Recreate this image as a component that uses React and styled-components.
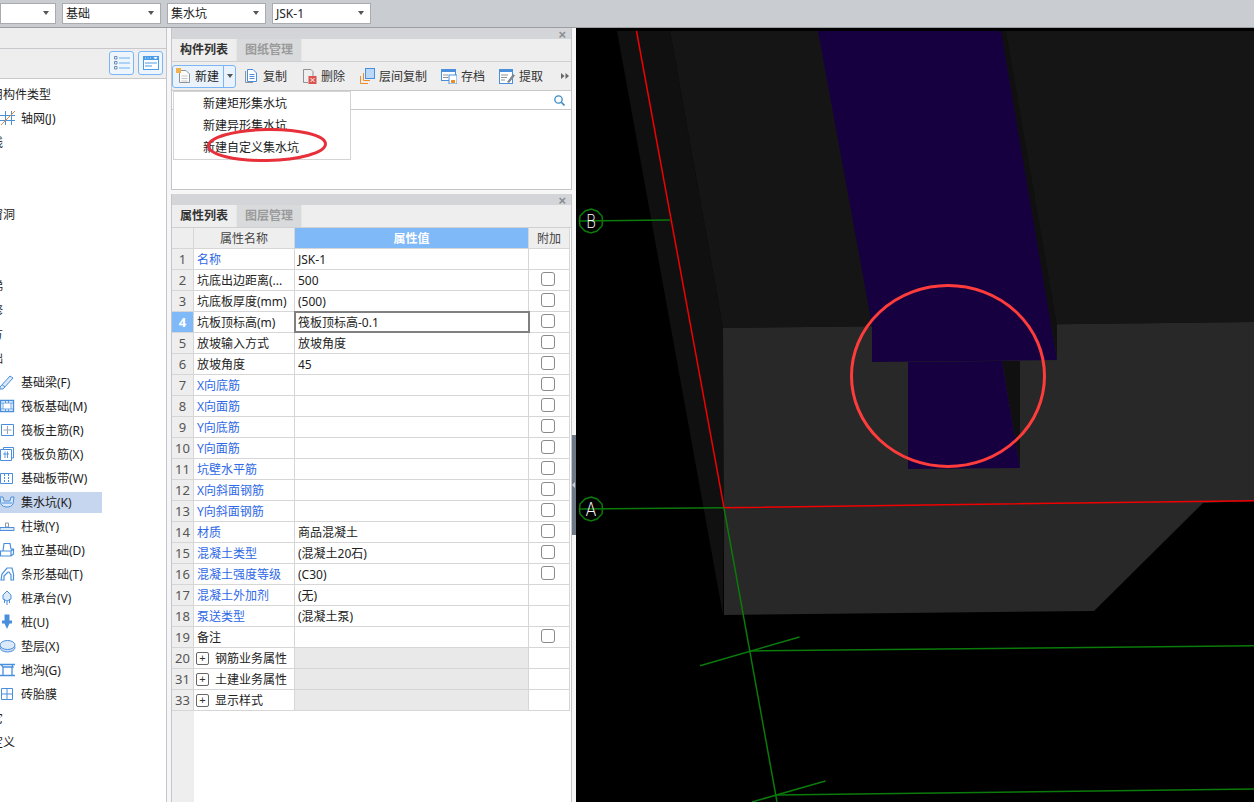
import React from "react";
import styled, { createGlobalStyle } from "styled-components";

const GlobalStyle = createGlobalStyle`
  html, body { margin: 0; padding: 0; background: #fff; }
  body { font-family: "Noto Sans", "Noto Sans CJK SC", sans-serif; font-size: 12px; color: #222; }
`;

const BLUE = "#4a8fdc";

const treeRows = [
  { label: "常用构件类型", group: true },
  { label: "轴网(J)", icon: "grid" },
  { label: "轴线", group: true },
  { label: "柱", group: true },
  { label: "墙", group: true },
  { label: "门窗洞", group: true },
  { label: "梁", group: true },
  { label: "板", group: true },
  { label: "楼梯", group: true },
  { label: "装修", group: true },
  { label: "土方", group: true },
  { label: "基础", group: true },
  { label: "基础梁(F)", icon: "beam" },
  { label: "筏板基础(M)", icon: "raft" },
  { label: "筏板主筋(R)", icon: "rebar" },
  { label: "筏板负筋(X)", icon: "negRebar" },
  { label: "基础板带(W)", icon: "strip" },
  { label: "集水坑(K)", icon: "pit", selected: true },
  { label: "柱墩(Y)", icon: "pier" },
  { label: "独立基础(D)", icon: "isolated" },
  { label: "条形基础(T)", icon: "stripFooting" },
  { label: "桩承台(V)", icon: "cap" },
  { label: "桩(U)", icon: "pile" },
  { label: "垫层(X)", icon: "cushion" },
  { label: "地沟(G)", icon: "trench" },
  { label: "砖胎膜", icon: "brick" },
  { label: "其它", group: true },
  { label: "自定义", group: true },
];

const props = [
  { name: "名称", value: "JSK-1", blue: true, noCheck: true },
  { name: "坑底出边距离(...", value: "500" },
  { name: "坑底板厚度(mm)", value: "(500)" },
  { name: "坑板顶标高(m)", value: "筏板顶标高-0.1", active: true },
  { name: "放坡输入方式", value: "放坡角度" },
  { name: "放坡角度", value: "45" },
  { name: "X向底筋", blue: true },
  { name: "X向面筋", blue: true },
  { name: "Y向底筋", blue: true },
  { name: "Y向面筋", blue: true },
  { name: "坑壁水平筋", blue: true },
  { name: "X向斜面钢筋", blue: true },
  { name: "Y向斜面钢筋", blue: true },
  { name: "材质", value: "商品混凝土", blue: true },
  { name: "混凝土类型", value: "(混凝土20石)", blue: true },
  { name: "混凝土强度等级", value: "(C30)", blue: true },
  { name: "混凝土外加剂", value: "(无)", blue: true, noCheck: true },
  { name: "泵送类型", value: "(混凝土泵)", blue: true, noCheck: true },
  { name: "备注" },
];

const groups = [
  { no: 20, name: "钢筋业务属性" },
  { no: 31, name: "土建业务属性" },
  { no: 33, name: "显示样式" },
];

const TreeIcon = ({ type }) => {
  const common = { fill: "none", stroke: BLUE, strokeWidth: 1 };
  const shapes = {
    grid: (
      <>
        <path d="M0 5.5H15M0 10.5H15M5.5 1V15M11.5 1V15" {...common} />
        <path d="M1 15L15 1" fill="none" stroke="#e8863c" />
      </>
    ),
    beam: <path d="M0 13L10 2L13 4L3 15L0 15ZM2 10.5L5 13" {...common} fill="#dbe9f8" />,
    raft: (
      <>
        <path d="M0.5 2.5H13.5V13.5H0.5Z" {...common} strokeWidth="1.4" />
        <path d="M3 5H11V11H3ZM0 5H3M0 11H3M11 5H14M11 11H14M5.5 2V5M8.5 2V5M5.5 11V14M8.5 11V14" {...common} strokeWidth="0.8" />
      </>
    ),
    rebar: (
      <>
        <path d="M1.5 2.5H13.5V13.5H1.5Z" {...common} />
        <path d="M7.5 4V12M3.5 8H11.5" fill="none" stroke="#9aa4ad" />
      </>
    ),
    negRebar: (
      <>
        <path d="M0.5 3.5H11.5V14.5H0.5ZM3.5 3.5V1.5H13.5V12H11.5" {...common} />
        <path d="M3 8H9M5 5.5V12M7.5 5.5V12" {...common} strokeWidth="0.9" />
      </>
    ),
    strip: (
      <>
        <path d="M0.5 3.5H12.5V13.5H0.5Z" {...common} />
        <path d="M4.5 4V13M8.5 4V13" {...common} strokeDasharray="2 1" />
      </>
    ),
    pit: <path d="M0 3L3 3L4 7H10L11 3L14 3L13 10C11 14 3 14 1 10ZM2 9H12" {...common} fill="#dbe9f8" />,
    pier: (
      <>
        <path d="M5.5 5H8.5V9H5.5Z" fill="none" stroke="#8f979e" />
        <path d="M0 9.5H14V12.5H0Z" {...common} fill="#dbe9f8" />
      </>
    ),
    isolated: <path d="M4 1.5H10L11 7H13.5V12L11 14H0.5V9H3ZM0.5 9H11V14M11 9L13.5 7" {...common} strokeWidth="1.2" />,
    stripFooting: <path d="M1 14L2 8L7 2H12L13.5 8V14H11V9L9 6H8L4 10V14Z" {...common} strokeWidth="1.2" />,
    cap: <path d="M7 1L11 5V9L7 11L3 9V5ZM7 11V15M4.5 9V13M9.5 9V13" {...common} fill="#dbe9f8" />,
    pile: <path d="M4.5 0.5H9.5V6.5H12V9.5H9.5L7 15L4.5 9.5H2V6.5H4.5Z" fill={BLUE} stroke="none" />,
    cushion: (
      <>
        <ellipse cx="7.5" cy="9.5" rx="7.5" ry="4.5" fill="#c8dcf3" stroke={BLUE} />
        <ellipse cx="7.5" cy="7" rx="7.5" ry="4.5" fill="#dbe9f8" stroke={BLUE} />
      </>
    ),
    trench: <path d="M0 2.5H15M3 5H13L12 2.5M3 5L1 2.5M3 5V13M12 5V13M0 13.5H15" {...common} strokeWidth="1.3" />,
    brick: <path d="M1.5 2.5H12.5V13.5H1.5ZM7 2.5V13.5M1.5 8H12.5" {...common} />,
  };
  return (
    <RowIcon viewBox="0 0 16 16">{shapes[type]}</RowIcon>
  );
};

const Combo = ({ width, children }) => (
  <ComboBox $width={width}>
    <span>{children}</span>
    <Caret />
  </ComboBox>
);

const ToolItem = ({ width, icon, children }) => (
  <ToolBtn $width={width}>
    {icon}
    <span>{children}</span>
  </ToolBtn>
);

const PanelStrip = () => (
  <Strip>
    <CloseMark>×</CloseMark>
  </Strip>
);

const CheckCell = ({ show }) => <AttachCell>{show && <CheckBox />}</AttachCell>;

const App = () => {
  return (
    <Root>
      <GlobalStyle />
      <TopBar>
        <Combo width={56}></Combo>
        <Combo width={99}>基础</Combo>
        <Combo width={99}>集水坑</Combo>
        <Combo width={99}>JSK-1</Combo>
      </TopBar>
      <Main>
        <TreePanel>
          <TreeHeadBlank />
          <TreeTools>
            <SquareBtn>
              <svg width="16" height="16" viewBox="0 0 16 16">
                <path d="M5 3H16M5 8H16M5 13H16" stroke="#6cb0f2" fill="none" />
                <path d="M0.5 1.5H3V4H0.5ZM0.5 6.5H3V9H0.5ZM0.5 11.5H3V14H0.5Z" stroke="#6b8fb5" fill="none" />
              </svg>
            </SquareBtn>
            <SquareBtn>
              <svg width="16" height="14" viewBox="0 0 16 14">
                <rect x="0.5" y="0.5" width="15" height="13" fill="#fff" stroke="#4a9be8" />
                <rect x="0" y="0" width="16" height="4" fill="#4a9be8" />
                <path d="M2 2H3M4.5 2H5.5M7 2H8M11 1.5H14L12.5 3Z" stroke="#fff" fill="#fff" strokeWidth="0.8" />
                <path d="M2 7H14M2 10H9" stroke="#4a9be8" fill="none" />
              </svg>
            </SquareBtn>
          </TreeTools>
          <TreeBody>
            {treeRows.map((row) => (
              <TreeRow key={row.label} $group={row.group}>
                <TreeItem $selected={row.selected} $group={row.group}>
                  {row.icon && <TreeIcon type={row.icon} />}
                  {row.label}
                </TreeItem>
              </TreeRow>
            ))}
          </TreeBody>
        </TreePanel>

        <MiddleColumn>
          <ListPanel>
            <PanelStrip />
            <Tabs>
              <Tab $active>构件列表</Tab>
              <Tab>图纸管理</Tab>
            </Tabs>
            <Toolbar>
              <NewButton>
                <NewMain>
                  <svg width="15" height="16" viewBox="0 0 15 16">
                    <path d="M3.5 2.5H10L13.5 6V14.5H3.5Z" fill="#fdfdfd" stroke="#8d9399" />
                    <path d="M5.5 8H11.5M5.5 10.5H11.5M5.5 13H11.5" stroke="#c3c7cb" />
                    <rect x="0" y="0" width="5" height="5" fill="#f4b04c" />
                  </svg>
                  <span>新建</span>
                </NewMain>
                <NewArrow><Caret /></NewArrow>
              </NewButton>
              <ToolItem width={58} icon={
                <svg width="15" height="16" viewBox="0 0 15 16">
                  <path d="M1.5 3V14.5H9" fill="none" stroke="#8d9399" />
                  <path d="M3.5 1.5H9L12.5 5V13.5H3.5Z" fill="#fff" stroke={BLUE} />
                  <path d="M5.5 6.5H10.5M5.5 8.5H10.5M5.5 10.5H10.5" stroke={BLUE} />
                </svg>
              }>复制</ToolItem>
              <ToolItem width={58} icon={
                <svg width="15" height="16" viewBox="0 0 15 16">
                  <path d="M1.5 1.5H9L11 3.5V8M6 14.5H1.5V1.5" fill="none" stroke="#8d9399" />
                  <rect x="6.5" y="8" width="8" height="8" fill="#d9534f" />
                  <path d="M8.5 10L12.5 14M12.5 10L8.5 14" stroke="#fff" />
                </svg>
              }>删除</ToolItem>
              <ToolItem width={81} icon={
                <svg width="15" height="16" viewBox="0 0 15 16">
                  <path d="M3.5 5V12.5H10M0.5 8V15.5H8" fill="none" stroke="#f08a24" />
                  <rect x="5.5" y="0.5" width="9" height="10" fill="#bcd8f8" stroke={BLUE} />
                </svg>
              }>层间复制</ToolItem>
              <ToolItem width={58} icon={
                <svg width="16" height="15" viewBox="0 0 16 15">
                  <rect x="0.5" y="0.5" width="14" height="11" fill="#fff" stroke={BLUE} />
                  <rect x="0" y="0" width="15" height="3" fill={BLUE} />
                  <path d="M2 6H7M2 8.5H7" stroke="#8d9399" />
                  <rect x="8" y="6" width="8" height="9" fill="#fff" stroke={BLUE} />
                  <rect x="10" y="11" width="4" height="3" fill="#f08a24" />
                </svg>
              }>存档</ToolItem>
              <ToolItem width={58} icon={
                <svg width="16" height="15" viewBox="0 0 16 15">
                  <rect x="0.5" y="1.5" width="13" height="13" fill="#fff" stroke={BLUE} />
                  <rect x="0" y="0" width="14" height="3" fill={BLUE} />
                  <path d="M2 6H9M2 8.5H8M2 11H6" stroke="#8d9399" />
                  <path d="M8 13L14 5L16 6.5L10 14Z" fill="#7d868e" />
                </svg>
              }>提取</ToolItem>
              <MoreMark>
                <svg width="8" height="6" viewBox="0 0 8 6">
                  <path d="M0 0L3.5 3L0 6ZM4.5 0L8 3L4.5 6Z" fill="#666" />
                </svg>
              </MoreMark>
            </Toolbar>
            <SearchRow>
              <svg width="11" height="11" viewBox="0 0 11 11">
                <circle cx="4.5" cy="4.5" r="3.7" fill="none" stroke="#3b8bc4" strokeWidth="1.3" />
                <path d="M7.3 7.3L10.5 10.5" stroke="#3b8bc4" strokeWidth="1.6" />
              </svg>
            </SearchRow>
            <DropMenu>
              <MenuItem>新建矩形集水坑</MenuItem>
              <MenuItem>新建异形集水坑</MenuItem>
              <MenuItem>新建自定义集水坑</MenuItem>
              <MenuMark viewBox="0 0 124 38" width="124" height="38">
                <ellipse cx="61" cy="18" rx="58.5" ry="15.5" fill="none" stroke="#e8303a" strokeWidth="3" transform="rotate(-1 61 18)" />
              </MenuMark>
            </DropMenu>
          </ListPanel>

          <PropPanel>
            <PanelStrip />
            <Tabs>
              <Tab $active>属性列表</Tab>
              <Tab>图层管理</Tab>
            </Tabs>
            <PropTable>
              <PropRow>
                <NumCell />
                <HeadCell>属性名称</HeadCell>
                <HeadCell $accent>属性值</HeadCell>
                <HeadCell>附加</HeadCell>
              </PropRow>
              {props.map((p, i) => (
                <PropRow key={p.name}>
                  <NumCell $active={p.active}>{i + 1}</NumCell>
                  <NameCell $blue={p.blue}>{p.name}</NameCell>
                  <ValueCell $active={p.active}>{p.value}</ValueCell>
                  <CheckCell show={!p.noCheck} />
                </PropRow>
              ))}
              {groups.map((g) => (
                <PropRow key={g.no}>
                  <NumCell>{g.no}</NumCell>
                  <NameCell>
                    <PlusBox>+</PlusBox>
                    {g.name}
                  </NameCell>
                  <ValueCell $muted />
                  <CheckCell />
                </PropRow>
              ))}
              <TableFill>
                <NumFill />
              </TableFill>
            </PropTable>
          </PropPanel>
        </MiddleColumn>

        <Splitter>
          <SplitHandle>
            <SplitArrow />
          </SplitHandle>
        </Splitter>

        <Canvas>
          <svg width="678" height="774" viewBox="576 28 678 774">
            <rect x="576" y="28" width="678" height="774" fill="#000" />
            <polygon points="617,31 670,31 723,328 723,615" fill="#101010" />
            <polygon points="670,31 1254,31 1254,322 723,328" fill="#151515" />
            <polygon points="723,328 1254,322 1254,501 1203,503 1094,611 724,615" fill="#282828" />
            <polygon points="1001,31 1006,31 1057,325 1057,360" fill="#101010" />
            <polygon points="818,31 1001,31 1057,360 872,362 872,325" fill="#16003f" />
            <polygon points="1002,361 1020,361 1020,468" fill="#101010" />
            <polygon points="908,362 1002,361 1020,468 908,469" fill="#16003f" />
            <path d="M636.5 31L724 507.7L1254 500.7" fill="none" stroke="#f00000" strokeWidth="1.5" />
            <g fill="none" stroke="#0a7a0a" strokeWidth="1.5">
              <path d="M579 221L670 220" />
              <path d="M579 509L724 507.7" />
              <path d="M724 508L777 802" />
              <path d="M749 651L1254 645.7" />
              <path d="M777 795L1254 789" />
              <path d="M700 665.7L799.5 637" />
              <path d="M752 802L825.5 781" />
              <polygon points="591,209 597,211 602,216 602.5,221 602,226 597,231 591,233 585,231 580,226 579.5,221 580,216 585,211" />
              <polygon points="591,497 597,499 602,504 602.5,509 602,514 597,519 591,521 585,519 580,514 579.5,509 580,504 585,499" />
            </g>
            <AxisLabel x="591" y="228" textLength="10" lengthAdjust="spacingAndGlyphs">B</AxisLabel>
            <AxisLabel x="591" y="516" textLength="11" lengthAdjust="spacingAndGlyphs">A</AxisLabel>
            <ellipse cx="948" cy="376" rx="96.5" ry="90.5" fill="none" stroke="#ff3c3c" strokeWidth="3" />
          </svg>
        </Canvas>
      </Main>
    </Root>
  );
};

const Root = styled.div`
  width: 1254px;
  height: 802px;
  overflow: hidden;
  display: flex;
  flex-direction: column;
  background: #f6f6f6;
`;

const TopBar = styled.div`
  flex: none;
  background: #c9ccd1;
  border-bottom: 1px solid #9b9da1;
  display: flex;
  align-items: center;
  gap: 6px;
  padding-bottom: 1px;
  box-sizing: border-box;
  height: 28px;
`;

const ComboBox = styled.div`
  width: ${(p) => p.$width}px;
  height: 21px;
  box-sizing: border-box;
  background: #fff;
  border: 1px solid #a9abae;
  display: flex;
  align-items: center;
  justify-content: space-between;
  padding: 0 6px 0 3px;
  flex: none;
`;

const Caret = styled.i`
  display: block;
  width: 0;
  height: 0;
  border-left: 3.5px solid transparent;
  border-right: 3.5px solid transparent;
  border-top: 4px solid #555;
`;

const Main = styled.div`
  flex: 1;
  display: flex;
  min-height: 0;
`;

const TreePanel = styled.div`
  width: 167px;
  flex: none;
  margin-right: 4px;
  border-right: 1px solid #c5c6cb;
  box-sizing: border-box;
  display: flex;
  flex-direction: column;
  background: #fff;
  overflow: hidden;
`;

const TreeHeadBlank = styled.div`
  height: 21px;
  flex: none;
  background: #eeeeee;
  border-bottom: 1px solid #c8c8cc;
  box-sizing: border-box;
`;

const TreeTools = styled.div`
  height: 30px;
  flex: none;
  box-sizing: border-box;
  background: #eeeeee;
  border-bottom: 1px solid #c8c8cc;
  display: flex;
  justify-content: flex-end;
  align-items: center;
  gap: 4px;
  padding: 0 3px 1px 0;
`;

const SquareBtn = styled.div`
  width: 25px;
  height: 24px;
  box-sizing: border-box;
  border: 1px solid #7ab6f5;
  border-radius: 3px;
  background: #eef5fd;
  display: flex;
  align-items: center;
  justify-content: center;
`;

const TreeBody = styled.div`
  flex: 1;
  padding-top: 3px;
`;

const TreeRow = styled.div`
  height: 24px;
  display: flex;
  align-items: center;
  margin-left: ${(p) => (p.$group ? "-21px" : "0")};
`;

const TreeItem = styled.div`
  height: 21px;
  width: ${(p) => (p.$group ? "auto" : "102px")};
  display: flex;
  align-items: center;
  white-space: nowrap;
  color: #1c1c1c;
  background: ${(p) => (p.$selected ? "#c6d6ee" : "transparent")};
  padding-left: ${(p) => (p.$group ? "0" : "21px")};
  box-sizing: border-box;
  position: relative;
`;

const RowIcon = styled.svg`
  position: absolute;
  left: 0;
  top: 2px;
  width: 16px;
  height: 16px;
`;

const MiddleColumn = styled.div`
  width: 401px;
  flex: none;
  display: flex;
  flex-direction: column;
  gap: 4px;
`;

const ListPanel = styled.div`
  height: 162px;
  flex: none;
  box-sizing: border-box;
  border: 1px solid #c4c5c8;
  border-top: 0;
  background: #fff;
  display: flex;
  flex-direction: column;
  position: relative;
`;

const PropPanel = styled.div`
  flex: 1;
  min-height: 0;
  box-sizing: border-box;
  border: 1px solid #c4c5c8;
  border-top: 0;
  border-bottom: 0;
  background: #fff;
  display: flex;
  flex-direction: column;
`;

const Strip = styled.div`
  height: 11px;
  flex: none;
  background: #d3d5d9;
  display: flex;
  align-items: center;
  justify-content: flex-end;
  padding-right: 5px;
`;

const CloseMark = styled.span`
  font-family: "Liberation Sans", sans-serif;
  font-size: 13px;
  font-weight: bold;
  line-height: 11px;
  color: #8b8d90;
  position: relative;
  top: 1px;
`;

const Tabs = styled.div`
  height: 23px;
  flex: none;
  box-sizing: border-box;
  background: #eeeeee;
  border-bottom: 1px solid #cfd0d2;
  display: flex;
`;

const Tab = styled.div`
  width: 65px;
  box-sizing: border-box;
  text-align: center;
  line-height: 22px;
  font-weight: bold;
  color: ${(p) => (p.$active ? "#333" : "#9a9a9a")};
  background: ${(p) => (p.$active ? "#eeeeee" : "#d9dadc")};
  border-right: 1px solid #e6e6e6;
`;

const Toolbar = styled.div`
  height: 29px;
  flex: none;
  box-sizing: border-box;
  background: #eeeeee;
  border-bottom: 1px solid #c8c8c8;
  display: flex;
  align-items: center;
  position: relative;
`;

const NewButton = styled.div`
  width: 64px;
  height: 23px;
  margin-right: 7px;
  box-sizing: border-box;
  border: 1px solid #7ab6f5;
  border-radius: 3px;
  background: #eaf3fc;
  display: flex;
  flex: none;
`;

const NewMain = styled.div`
  flex: 1;
  display: flex;
  align-items: center;
  gap: 4px;
  padding-left: 3px;
  border-right: 1px solid #7ab6f5;
`;

const NewArrow = styled.div`
  width: 11px;
  display: flex;
  align-items: center;
  justify-content: center;
`;

const ToolBtn = styled.div`
  width: ${(p) => p.$width}px;
  flex: none;
  display: flex;
  align-items: center;
  gap: 4px;
  padding-left: 1px;
  box-sizing: border-box;
  color: #333;
`;

const MoreMark = styled.div`
  position: absolute;
  right: 2px;
  top: 11px;
  line-height: 0;
`;

const SearchRow = styled.div`
  height: 19px;
  flex: none;
  box-sizing: border-box;
  border-bottom: 1px solid #c8c8c8;
  display: flex;
  align-items: center;
  justify-content: flex-end;
  padding-right: 6px;
`;

const DropMenu = styled.div`
  position: absolute;
  left: 1px;
  top: 63px;
  width: 178px;
  height: 69px;
  box-sizing: border-box;
  background: #fff;
  border: 1px solid #d4d4d4;
  padding-top: 1px;
  z-index: 2;
`;

const MenuItem = styled.div`
  height: 22px;
  line-height: 22px;
  padding-left: 29px;
  color: #222;
`;

const MenuMark = styled.svg`
  position: absolute;
  left: 32px;
  top: 35px;
  overflow: visible;
`;

const PropTable = styled.div`
  flex: 1;
  min-height: 0;
  display: flex;
  flex-direction: column;
`;

const PropRow = styled.div`
  height: 21px;
  flex: none;
  box-sizing: border-box;
  display: grid;
  grid-template-columns: 22px 101px 234px 41px;
  border-bottom: 1px solid #d6d6d6;
  width: 398px;
`;

const cellBase = `
  border-right: 1px solid #d6d6d6;
  box-sizing: border-box;
  display: flex;
  align-items: center;
  white-space: nowrap;
  overflow: hidden;
`;

const NumCell = styled.div`
  ${cellBase}
  justify-content: center;
  font-size: 13px;
  background: ${(p) => (p.$active ? "#7fb9f7" : "#eeeeee")};
  color: ${(p) => (p.$active ? "#fff" : "#555")};
  font-weight: ${(p) => (p.$active ? "bold" : "normal")};
`;

const HeadCell = styled.div`
  ${cellBase}
  justify-content: center;
  background: ${(p) => (p.$accent ? "#7fb9f7" : "#eeeeee")};
  color: ${(p) => (p.$accent ? "#fff" : "#444")};
  font-weight: ${(p) => (p.$accent ? "bold" : "normal")};
`;

const NameCell = styled.div`
  ${cellBase}
  padding-left: 3px;
  color: ${(p) => (p.$blue ? "#2e68e6" : "#222")};
`;

const ValueCell = styled.div`
  ${cellBase}
  padding-left: 3px;
  color: #222;
  background: ${(p) => (p.$muted ? "#e9e9e9" : "#fff")};
  ${(p) => p.$active && "outline: 2px solid #808080; outline-offset: -1px; z-index: 1;"}
`;

const AttachCell = styled.div`
  ${cellBase}
  justify-content: center;
`;

const CheckBox = styled.i`
  display: block;
  width: 14px;
  height: 14px;
  margin: 0 2px 2px 0;
  box-sizing: border-box;
  border: 1px solid #8a8a8a;
  border-radius: 3px;
  background: #fff;
`;

const PlusBox = styled.i`
  width: 13px;
  height: 13px;
  margin-left: -1px;
  box-sizing: border-box;
  border: 1px solid #666;
  border-radius: 2px;
  margin-right: 6px;
  font-style: normal;
  font-family: "Liberation Sans", sans-serif;
  font-size: 11px;
  line-height: 11px;
  text-align: center;
  color: #333;
  flex: none;
`;

const TableFill = styled.div`
  flex: 1;
  display: flex;
`;

const NumFill = styled.div`
  width: 22px;
  background: #eeeeee;
`;

const Splitter = styled.div`
  width: 4px;
  flex: none;
  padding-top: 407px;
  box-sizing: content-box;
`;

const SplitHandle = styled.div`
  height: 100px;
  background: #6d7986;
  display: flex;
  align-items: center;
`;

const SplitArrow = styled.i`
  display: block;
  width: 0;
  height: 0;
  border-top: 3px solid transparent;
  border-bottom: 3px solid transparent;
  border-right: 3px solid #c9ced3;
`;

const Canvas = styled.div`
  flex: 1;
  background: #000;
  line-height: 0;
  overflow: hidden;
`;

const AxisLabel = styled.text`
  font-family: "DejaVu Sans", sans-serif;
  font-weight: 200;
  font-size: 19px;
  fill: #fff;
  text-anchor: middle;
`;

export default App;
